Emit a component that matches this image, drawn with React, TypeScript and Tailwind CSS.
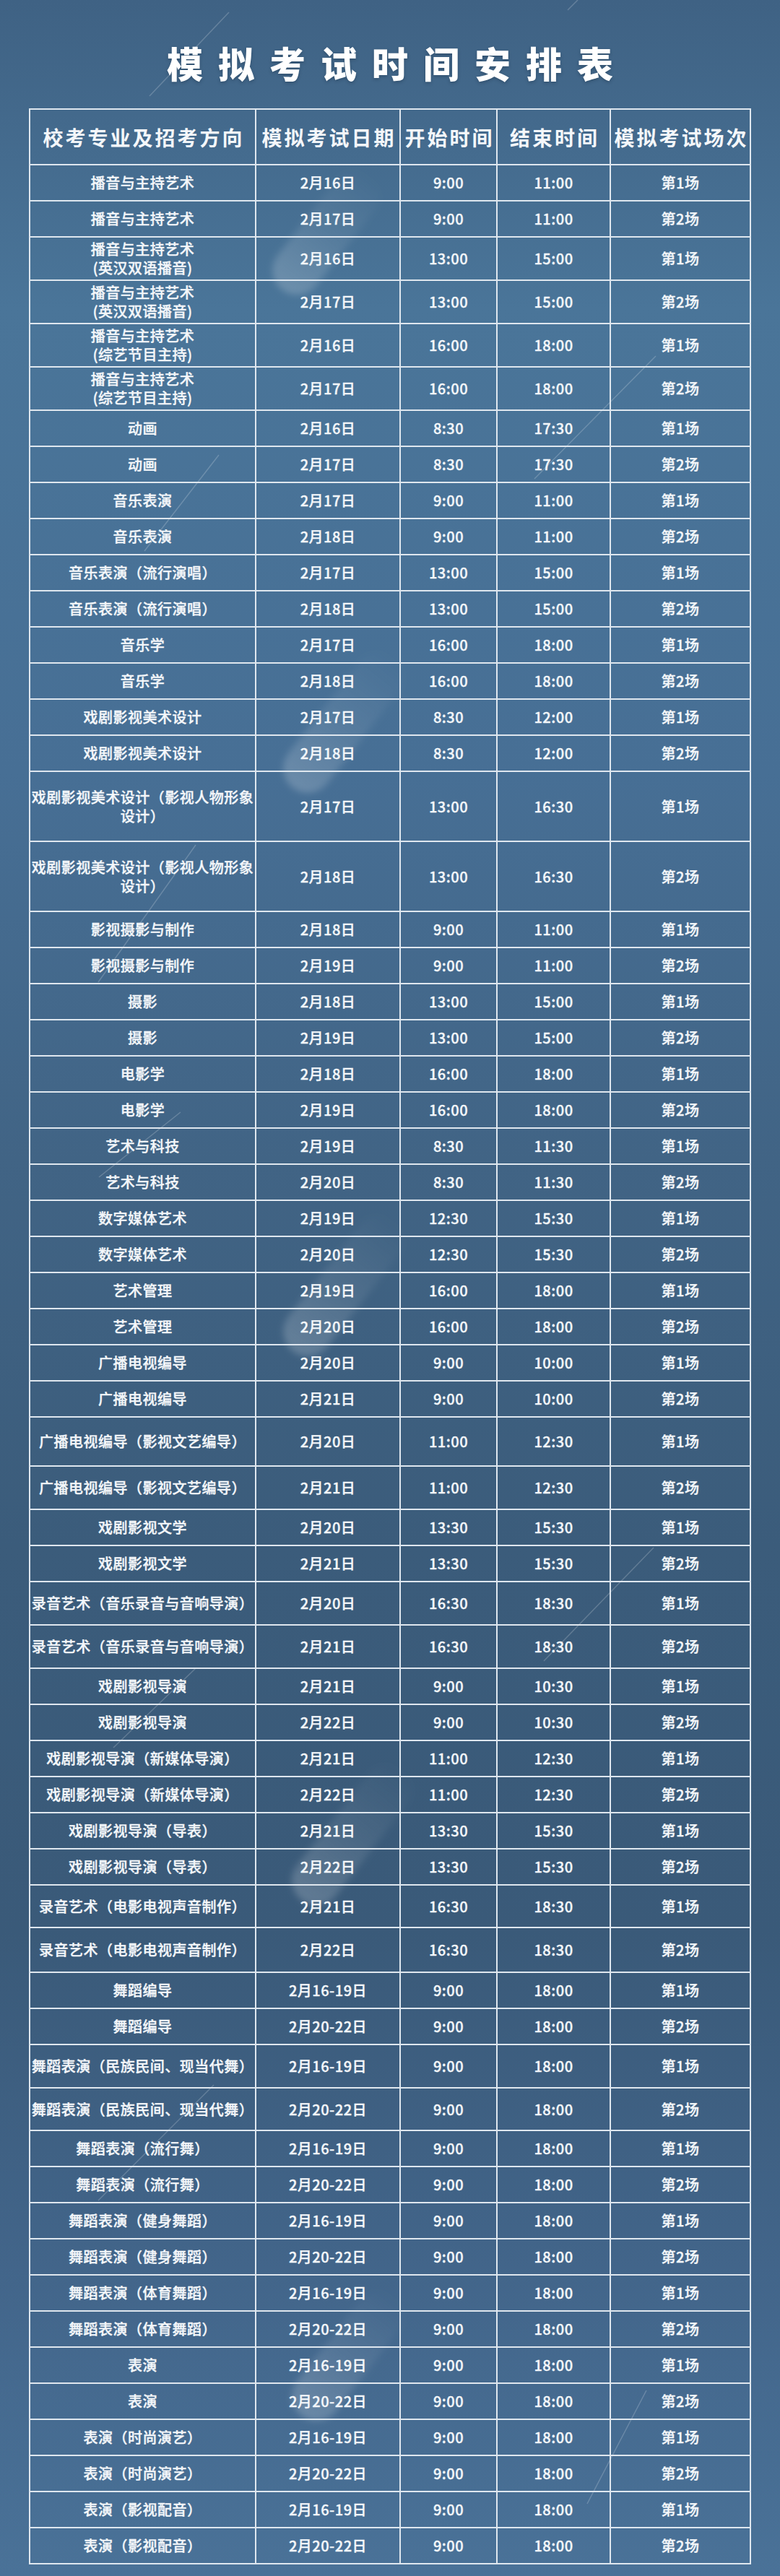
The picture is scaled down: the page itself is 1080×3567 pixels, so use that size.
interface ExamRow {
  name: string[]
  date: string
  start: string
  end: string
  no: string
  h: string
}

const r = (
  name: string | string[],
  date: string,
  start: string,
  end: string,
  no: string,
  h = 'h-[50px]',
): ExamRow => ({ name: Array.isArray(name) ? name : [name], date, start, end, no, h })

const rows: ExamRow[] = [
  r('播音与主持艺术', '2月16日', '9:00', '11:00', '第1场'),
  r('播音与主持艺术', '2月17日', '9:00', '11:00', '第2场'),
  r(['播音与主持艺术', '(英汉双语播音)'], '2月16日', '13:00', '15:00', '第1场', 'h-[60px]'),
  r(['播音与主持艺术', '(英汉双语播音)'], '2月17日', '13:00', '15:00', '第2场', 'h-[60px]'),
  r(['播音与主持艺术', '(综艺节目主持)'], '2月16日', '16:00', '18:00', '第1场', 'h-[60px]'),
  r(['播音与主持艺术', '(综艺节目主持)'], '2月17日', '16:00', '18:00', '第2场', 'h-[60px]'),
  r('动画', '2月16日', '8:30', '17:30', '第1场'),
  r('动画', '2月17日', '8:30', '17:30', '第2场'),
  r('音乐表演', '2月17日', '9:00', '11:00', '第1场'),
  r('音乐表演', '2月18日', '9:00', '11:00', '第2场'),
  r('音乐表演（流行演唱）', '2月17日', '13:00', '15:00', '第1场'),
  r('音乐表演（流行演唱）', '2月18日', '13:00', '15:00', '第2场'),
  r('音乐学', '2月17日', '16:00', '18:00', '第1场'),
  r('音乐学', '2月18日', '16:00', '18:00', '第2场'),
  r('戏剧影视美术设计', '2月17日', '8:30', '12:00', '第1场'),
  r('戏剧影视美术设计', '2月18日', '8:30', '12:00', '第2场'),
  r(['戏剧影视美术设计（影视人物形象', '设计）'], '2月17日', '13:00', '16:30', '第1场', 'h-[97px]'),
  r(['戏剧影视美术设计（影视人物形象', '设计）'], '2月18日', '13:00', '16:30', '第2场', 'h-[97px]'),
  r('影视摄影与制作', '2月18日', '9:00', '11:00', '第1场'),
  r('影视摄影与制作', '2月19日', '9:00', '11:00', '第2场'),
  r('摄影', '2月18日', '13:00', '15:00', '第1场'),
  r('摄影', '2月19日', '13:00', '15:00', '第2场'),
  r('电影学', '2月18日', '16:00', '18:00', '第1场'),
  r('电影学', '2月19日', '16:00', '18:00', '第2场'),
  r('艺术与科技', '2月19日', '8:30', '11:30', '第1场'),
  r('艺术与科技', '2月20日', '8:30', '11:30', '第2场'),
  r('数字媒体艺术', '2月19日', '12:30', '15:30', '第1场'),
  r('数字媒体艺术', '2月20日', '12:30', '15:30', '第2场'),
  r('艺术管理', '2月19日', '16:00', '18:00', '第1场'),
  r('艺术管理', '2月20日', '16:00', '18:00', '第2场'),
  r('广播电视编导', '2月20日', '9:00', '10:00', '第1场'),
  r('广播电视编导', '2月21日', '9:00', '10:00', '第2场'),
  r('广播电视编导（影视文艺编导）', '2月20日', '11:00', '12:30', '第1场', 'h-[68px]'),
  r('广播电视编导（影视文艺编导）', '2月21日', '11:00', '12:30', '第2场', 'h-[60px]'),
  r('戏剧影视文学', '2月20日', '13:30', '15:30', '第1场'),
  r('戏剧影视文学', '2月21日', '13:30', '15:30', '第2场'),
  r('录音艺术（音乐录音与音响导演）', '2月20日', '16:30', '18:30', '第1场', 'h-[60px]'),
  r('录音艺术（音乐录音与音响导演）', '2月21日', '16:30', '18:30', '第2场', 'h-[60px]'),
  r('戏剧影视导演', '2月21日', '9:00', '10:30', '第1场'),
  r('戏剧影视导演', '2月22日', '9:00', '10:30', '第2场'),
  r('戏剧影视导演（新媒体导演）', '2月21日', '11:00', '12:30', '第1场'),
  r('戏剧影视导演（新媒体导演）', '2月22日', '11:00', '12:30', '第2场'),
  r('戏剧影视导演（导表）', '2月21日', '13:30', '15:30', '第1场'),
  r('戏剧影视导演（导表）', '2月22日', '13:30', '15:30', '第2场'),
  r('录音艺术（电影电视声音制作）', '2月21日', '16:30', '18:30', '第1场', 'h-[59px]'),
  r('录音艺术（电影电视声音制作）', '2月22日', '16:30', '18:30', '第2场', 'h-[62px]'),
  r('舞蹈编导', '2月16-19日', '9:00', '18:00', '第1场'),
  r('舞蹈编导', '2月20-22日', '9:00', '18:00', '第2场'),
  r('舞蹈表演（民族民间、现当代舞）', '2月16-19日', '9:00', '18:00', '第1场', 'h-[60px]'),
  r('舞蹈表演（民族民间、现当代舞）', '2月20-22日', '9:00', '18:00', '第2场', 'h-[59px]'),
  r('舞蹈表演（流行舞）', '2月16-19日', '9:00', '18:00', '第1场'),
  r('舞蹈表演（流行舞）', '2月20-22日', '9:00', '18:00', '第2场'),
  r('舞蹈表演（健身舞蹈）', '2月16-19日', '9:00', '18:00', '第1场'),
  r('舞蹈表演（健身舞蹈）', '2月20-22日', '9:00', '18:00', '第2场'),
  r('舞蹈表演（体育舞蹈）', '2月16-19日', '9:00', '18:00', '第1场'),
  r('舞蹈表演（体育舞蹈）', '2月20-22日', '9:00', '18:00', '第2场'),
  r('表演', '2月16-19日', '9:00', '18:00', '第1场'),
  r('表演', '2月20-22日', '9:00', '18:00', '第2场'),
  r('表演（时尚演艺）', '2月16-19日', '9:00', '18:00', '第1场'),
  r('表演（时尚演艺）', '2月20-22日', '9:00', '18:00', '第2场'),
  r('表演（影视配音）', '2月16-19日', '9:00', '18:00', '第1场'),
  r('表演（影视配音）', '2月20-22日', '9:00', '18:00', '第2场'),
]

const headers = ['校考专业及招考方向', '模拟考试日期', '开始时间', '结束时间', '模拟考试场次']

// faint light streaks and glows behind the table
const blobs = [
  { x: 452, y: 322, len: 200 },
  { x: 476, y: 1000, len: 230 },
  { x: 476, y: 1780, len: 230 },
  { x: 488, y: 2540, len: 230 },
  { x: 482, y: 3262, len: 210 },
]

const streaks = [
  [207, 133, 317, 17],
  [786, 14, 800, 0],
  [200, 763, 303, 630],
  [740, 663, 908, 493],
  [136, 1360, 271, 1170],
  [137, 1630, 250, 1540],
  [753, 2300, 905, 2143],
  [157, 2420, 271, 2310],
  [136, 3047, 296, 2887],
  [813, 3467, 895, 3310],
]

function Backdrop() {
  return (
    <svg className="pointer-events-none absolute inset-0 h-full w-full" viewBox="0 0 1080 3567" preserveAspectRatio="none">
      <defs>
        <linearGradient id="glow" x1="0" y1="0" x2="1" y2="0">
          <stop offset="0" stopColor="#ffffff" stopOpacity="0.2" />
          <stop offset="0.5" stopColor="#ffffff" stopOpacity="0.08" />
          <stop offset="1" stopColor="#ffffff" stopOpacity="0" />
        </linearGradient>
        <filter id="soft" x="-50%" y="-50%" width="200%" height="200%">
          <feGaussianBlur stdDeviation="5" />
        </filter>
      </defs>
      {blobs.map((b, i) => (
        <g key={i} transform={`translate(${b.x} ${b.y}) rotate(-52)`} filter="url(#soft)">
          <rect x={-b.len / 2} y={-34} width={b.len} height={68} rx={34} fill="url(#glow)" />
        </g>
      ))}
      {streaks.map(([x1, y1, x2, y2], i) => (
        <line key={i} x1={x1} y1={y1} x2={x2} y2={y2} stroke="#ffffff" strokeOpacity="0.2" strokeWidth="1.5" />
      ))}
    </svg>
  )
}

const cell = 'flex items-center justify-center border-r-2 border-b-2 border-[#dfe7ef] text-center'

export default function App() {
  return (
    <div className="relative h-[3567px] w-[1080px] overflow-hidden bg-[linear-gradient(180deg,#3f6284_0%,#4a7599_12%,#476f95_30%,#416485_45%,#3b5c7b_60%,#3a5a79_75%,#42658a_88%,#4a7298_100%)] font-['Noto_Sans_CJK_SC','Noto_Sans',sans-serif] text-[#f4f7fa]">
      <Backdrop />
      <div className="relative">
        <h1 className="h-[150px] pt-[61px] pl-[21px] text-center text-[50px] leading-none font-black tracking-[21px] text-white [text-shadow:0_2px_4px_rgba(20,40,60,0.35)]">
          模拟考试时间安排表
        </h1>

        <div className="ml-[40px] grid w-[1000px] grid-cols-[313px_200px_134px_157px_194px] border-t-2 border-l-2 border-[#dfe7ef]">
          {headers.map((h) => (
            <div key={h} className={`${cell} h-[77px] pl-[3px] text-[28px] font-bold tracking-[3px] whitespace-nowrap`}>
              {h}
            </div>
          ))}

          {rows.map((row, i) =>
            [row.name, [row.date], [row.start], [row.end], [row.no]].map((lines, j) => (
              <div
                key={`${i}-${j}`}
                className={`${cell} ${row.h} flex-col text-[20px] leading-[26px] font-medium tracking-[0.5px] whitespace-nowrap [-webkit-text-stroke:0.35px_#f4f7fa]`}
              >
                {lines.map((l) => (
                  <span key={l}>{l}</span>
                ))}
              </div>
            )),
          )}
        </div>
      </div>
    </div>
  )
}
